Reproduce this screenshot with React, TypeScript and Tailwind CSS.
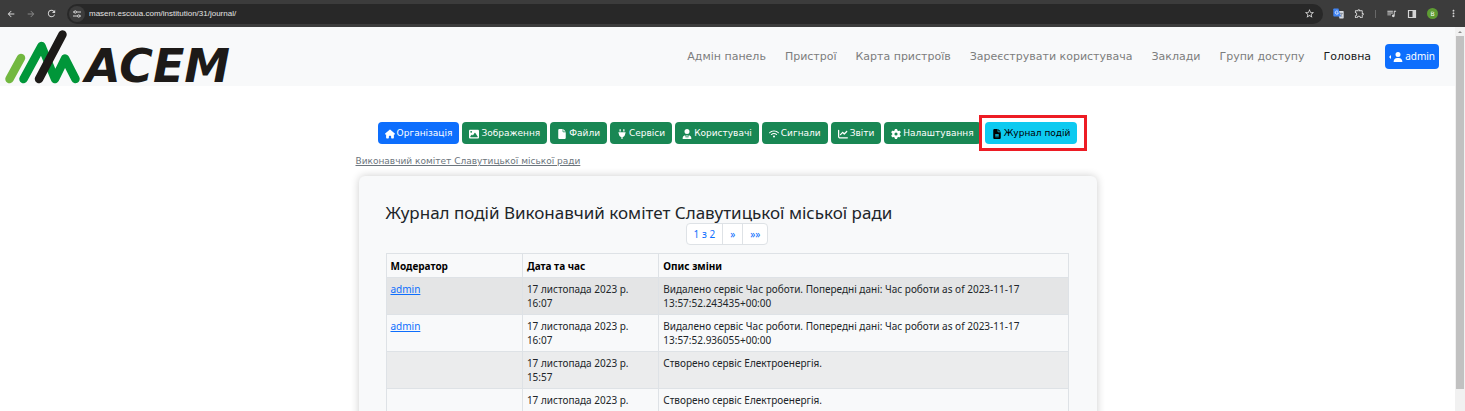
import type { ReactNode } from "react";
import {
  FaChartLine,
  FaFile,
  FaFileLines,
  FaGear,
  FaHouse,
  FaImage,
  FaPlug,
  FaUser,
  FaUserTie,
  FaWifi,
} from "react-icons/fa6";
import {
  MdArrowBack,
  MdArrowForward,
  MdMoreVert,
  MdOutlineExtension,
  MdQueueMusic,
  MdRefresh,
  MdStarBorder,
} from "react-icons/md";

const NAV_LINKS = [
  "Адмін панель",
  "Пристрої",
  "Карта пристроїв",
  "Зареєструвати користувача",
  "Заклади",
  "Групи доступу",
];

const TABS: { label: string; icon: ReactNode; primary?: boolean }[] = [
  { label: "Організація", icon: <FaHouse />, primary: true },
  { label: "Зображення", icon: <FaImage /> },
  { label: "Файли", icon: <FaFile /> },
  { label: "Сервіси", icon: <FaPlug /> },
  { label: "Користувачі", icon: <FaUserTie /> },
  { label: "Сигнали", icon: <FaWifi /> },
  { label: "Звіти", icon: <FaChartLine /> },
  { label: "Налаштування", icon: <FaGear /> },
];

const ROWS = [
  {
    moderator: "admin",
    date: "17 листопада 2023 р. 16:07",
    text: "Видалено сервіс Час роботи. Попередні дані: Час роботи as of 2023-11-17 13:57:52.243435+00:00",
    hovered: true,
  },
  {
    moderator: "admin",
    date: "17 листопада 2023 р. 16:07",
    text: "Видалено сервіс Час роботи. Попередні дані: Час роботи as of 2023-11-17 13:57:52.936055+00:00",
  },
  { moderator: "", date: "17 листопада 2023 р. 15:57", text: "Створено сервіс Електроенергія." },
  { moderator: "", date: "17 листопада 2023 р.", text: "Створено сервіс Електроенергія." },
];

function BrowserBar() {
  return (
    <header className="flex h-[27px] shrink-0 items-center bg-[#3c3c3c] pr-1.5 pl-1.5 text-[#d5d5d5]">
      <div className="flex items-center gap-2.5">
        <button type="button" aria-label="Назад">
          <MdArrowBack size={10} />
        </button>
        <button type="button" aria-label="Вперед" className="text-[#858585]">
          <MdArrowForward size={10} />
        </button>
        <button type="button" aria-label="Оновити">
          <MdRefresh size={11} />
        </button>
      </div>
      <div className="ml-2.5 flex h-5 flex-1 items-center rounded-full bg-[#282828] pr-2 pl-0.5">
        <button
          type="button"
          aria-label="Відомості про сайт"
          className="flex size-4 items-center justify-center rounded-full bg-[#3c3c3c]"
        >
          <svg viewBox="0 0 10 10" className="size-2.5" fill="none" stroke="currentColor">
            <path d="M1 3h1M4.6 3H9M1 7h4.4M8 7h1" />
            <circle cx="3.3" cy="3" r="1.2" />
            <circle cx="6.7" cy="7" r="1.2" />
          </svg>
        </button>
        <input
          type="text"
          aria-label="Адреса"
          defaultValue="masem.escoua.com/institution/31/journal/"
          className="ml-1 min-w-0 flex-1 bg-transparent font-['Liberation_Sans',sans-serif] text-[8px] text-[#e3e3e3] outline-none"
        />
        <button type="button" aria-label="Закладка">
          <MdStarBorder size={11} />
        </button>
      </div>
      <div className="ml-2.5 flex items-center gap-2.5">
        <button type="button" aria-label="Перекласти">
          <svg viewBox="0 0 11 11" className="size-[11px]">
            <path d="M4.5 3H10q.7 0 .7.7v6q0 .8-.8.8H6.5z" fill="#d8dce3" />
            <path
              d="M6.4 5.4h3.4M8 4.7v.7M9.2 5.4Q8.6 7.6 6.8 8.6M7 6.4q.8 1.7 2.3 2.3"
              fill="none"
              stroke="#5f6b7c"
              strokeWidth=".6"
            />
            <path d="M1 .5h4.4l2.4 8H1q-.7 0-.7-.7V1.2Q.3.5 1 .5z" fill="#4285f4" />
            <path
              d="M5.1 3.6A1.6 1.6 0 1 0 5.4 4.9H3.9"
              fill="none"
              stroke="#fff"
              strokeWidth=".7"
            />
          </svg>
        </button>
        <button type="button" aria-label="Розширення">
          <MdOutlineExtension size={11} />
        </button>
        <span className="h-2 w-px bg-[#686868]" />
        <button type="button" aria-label="Медіа">
          <MdQueueMusic size={11} />
        </button>
        <button type="button" aria-label="Бічна панель">
          <svg viewBox="0 0 10 10" className="size-2.5">
            <path d="M1.5 1.5h7v7h-7z" fill="none" stroke="currentColor" strokeWidth="1.2" />
            <path d="M5.5 1H9v8H5.5z" fill="currentColor" />
          </svg>
        </button>
        <button
          type="button"
          className="flex size-[11px] items-center justify-center rounded-full bg-[#5e9c33] text-[6px] text-white"
        >
          В
        </button>
        <button type="button" aria-label="Меню">
          <MdMoreVert size={11} />
        </button>
      </div>
    </header>
  );
}

function Logo() {
  return (
    <svg viewBox="0 0 236 59" className="h-[59px] w-[236px] overflow-visible" role="img" aria-label="MACEM">
      <g fill="none" strokeWidth="8.5" strokeLinecap="round" strokeLinejoin="round">
        <path d="M9.5 52 21 31" stroke="#72b840" />
        <path d="M23.5 52 41.5 19 55 52 65 31.5 75.5 52" stroke="#009639" />
        <path d="M39 52 62.5 7.5" stroke="#1d1a18" />
      </g>
      <text
        x="85"
        y="55"
        fill="#1d1a18"
        className="font-['DejaVu_Sans',sans-serif] text-[46px] font-bold italic"
      >
        ACEM
      </text>
    </svg>
  );
}

function Navbar() {
  return (
    <nav className="flex items-center bg-[#f8f9fa] pr-4">
      <a href="#home">
        <Logo />
      </a>
      <div className="ml-auto flex items-center gap-[19px] pt-0.5 text-[11px] text-[#7c7d7d]">
        {NAV_LINKS.map((label) => (
          <a key={label} href="#nav">
            {label}
          </a>
        ))}
        <a href="#main" className="text-[#191a1a]">
          Головна
        </a>
      </div>
      <button
        type="button"
        className="ml-3.5 flex h-[25px] items-center gap-0.5 rounded bg-[#0d6efd] px-1 font-['Noto_Sans',sans-serif] text-[10px] text-white"
      >
        <span className="size-0 border-y-2 border-r-2 border-y-transparent border-r-white" />
        <FaUser size={10} />
        <span>admin</span>
      </button>
    </nav>
  );
}

function Tabs() {
  return (
    <div className="flex items-center justify-center gap-[3px] text-[9px]">
      {TABS.map((t) => (
        <a
          key={t.label}
          href="#tab"
          className={`flex h-[22px] items-center gap-0.5 rounded px-[7px] pt-px text-white ${
            t.primary ? "bg-[#0d6efd]" : "bg-[#198754]"
          }`}
        >
          <span className="text-[10px]">{t.icon}</span>
          {t.label}
        </a>
      ))}
      <div className="relative ml-px">
        <a
          href="#journal"
          className="flex h-[22px] items-center gap-0.5 rounded bg-[#0dcaf0] px-[7px] pt-px text-black"
        >
          <span className="text-[10px]">
            <FaFileLines />
          </span>
          Журнал подій
        </a>
        <span className="pointer-events-none absolute -inset-y-[7px] -right-[10px] -left-[6px] border-3 border-[#ed1c24]" />
      </div>
    </div>
  );
}

function Pagination() {
  return (
    <div className="flex justify-center">
      <div className="flex h-[22px] divide-x divide-[#dee2e6] rounded border border-[#dee2e6] bg-white font-['Noto_Sans',sans-serif] text-[10px] text-[#0d6efd]">
        <a href="#page" className="flex items-center px-[7px]">
          1 з 2
        </a>
        <a href="#next" className="flex items-center px-[7px]">
          »
        </a>
        <a href="#last" className="flex items-center px-[7px]">
          »»
        </a>
      </div>
    </div>
  );
}

function JournalTable() {
  return (
    <table className="mt-2 w-full table-fixed border-collapse text-left font-['Noto_Sans',sans-serif] text-[10px] leading-[14px] text-[#212529]">
      <thead>
        <tr className="text-black">
          <th className="w-1/5 border border-[#dee2e6] px-1 pt-[5px] pb-1">Модератор</th>
          <th className="w-1/5 border border-[#dee2e6] px-1 pt-[5px] pb-1">Дата та час</th>
          <th className="border border-[#dee2e6] px-1 pt-[5px] pb-1">Опис зміни</th>
        </tr>
      </thead>
      <tbody>
        {ROWS.map((row, i) => (
          <tr
            key={i}
            className={`align-top ${row.hovered ? "bg-[#e4e5e6]" : i % 2 === 0 ? "bg-[#ebeced]" : ""}`}
          >
            <td className="border border-[#dee2e6] px-1 py-1">
              {row.moderator && (
                <a href="#user" className="text-[#0d6efd] underline">
                  {row.moderator}
                </a>
              )}
            </td>
            <td className="border border-[#dee2e6] px-1 py-1">{row.date}</td>
            <td className="border border-[#dee2e6] px-1 py-1">{row.text}</td>
          </tr>
        ))}
      </tbody>
    </table>
  );
}

export default function App() {
  return (
    <div className="flex h-screen flex-col overflow-hidden bg-white font-['DejaVu_Sans',sans-serif]">
      <BrowserBar />
      <div className="flex min-h-0 flex-1">
        <div className="min-w-0 flex-1 overflow-hidden">
          <Navbar />
          <main className="mx-auto mt-9 max-w-[744px]">
            <Tabs />
            <a href="#institution" className="mt-2.5 block text-[9px] leading-[14px] text-[#6c757d] underline">
              Виконавчий комітет Славутицької міської ради
            </a>
            <section className="mx-[3px] mt-2 rounded-md bg-[#f8f9fa] pt-7 pr-7 pb-7 pl-[27px] shadow-[0_0_8px_rgba(0,0,0,0.2)]">
              <h1 className="pb-0.5 font-['Noto_Sans',sans-serif] text-[17px] leading-[17px] text-[#212529]">
                Журнал подій Виконавчий комітет Славутицької міської ради
              </h1>
              <Pagination />
              <JournalTable />
            </section>
          </main>
        </div>
        <div className="flex w-2.5 shrink-0 flex-col items-center bg-[#f1f1f1]">
          <div className="flex h-[9px] items-center">
            <span className="size-0 border-x-2 border-b-2 border-x-transparent border-b-[#8b8b8b]" />
          </div>
          <div className="h-[92%] w-2 bg-[#c1c1c1]" />
        </div>
      </div>
    </div>
  );
}
